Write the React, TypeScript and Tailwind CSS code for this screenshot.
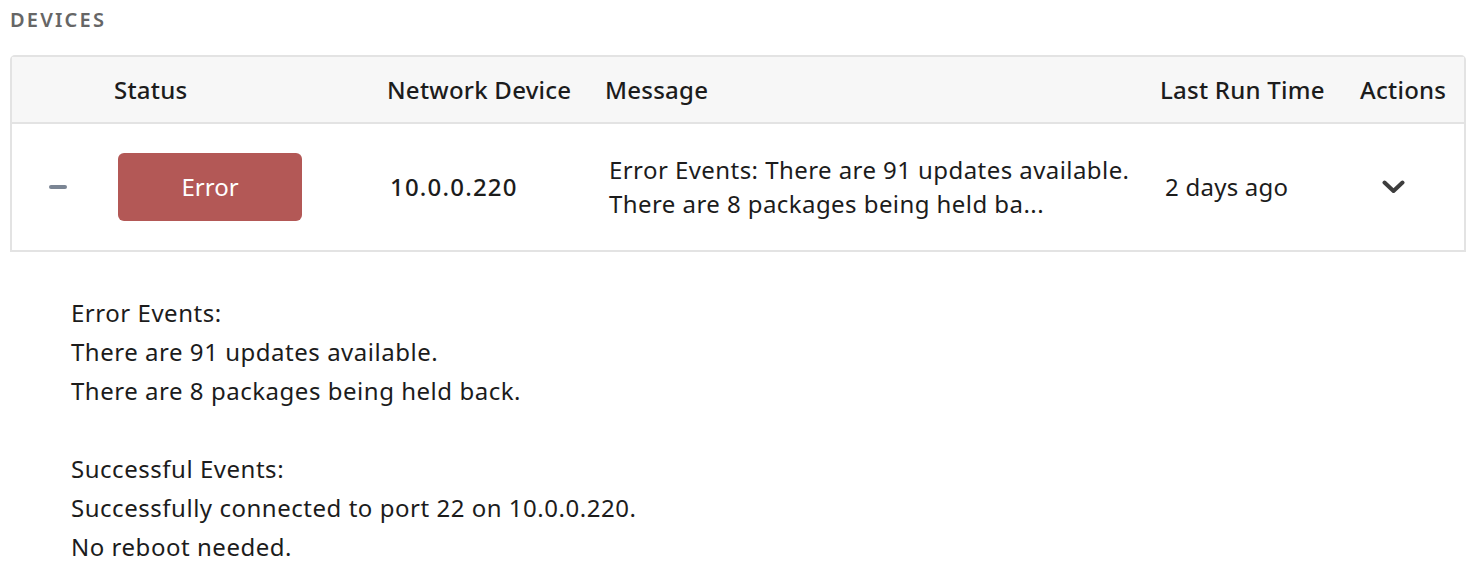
import React from 'react'

const headers = ['', 'Status', 'Network Device', 'Message', 'Last Run Time', 'Actions']

const App = () => {
	return (
		<main className="w-[1476px] h-[570px] bg-white text-[#1c1c1c] overflow-hidden" style={{ fontFamily: '"Noto Sans", Roboto, sans-serif' }}>
			<h2 className="pl-[10px] pt-[5px] h-[55px] text-[20px] font-semibold tracking-[0.11em] text-[#666]">DEVICES</h2>
			<section className="mx-[10px] border-2 border-[#e3e3e3] rounded-t-[5px]">
				<div className="grid grid-cols-[88px_273px_218px_555px_200px_1fr] h-[67px] bg-[#f7f7f7] border-b-2 border-[#e3e3e3] items-center">
					{headers.map((h, i) => (
						<div key={i} className="pl-[14px] text-[24px] font-medium tracking-[0.01em]">{h}</div>
					))}
				</div>
				<div className="grid grid-cols-[88px_273px_218px_555px_200px_1fr] h-[126px] items-center">
					<div className="flex justify-center pl-[4px]">
						<span className="block w-[18px] h-[4px] rounded-sm bg-[#7b8594]"></span>
					</div>
					<div className="pl-[18px]">
						<button className="w-[184px] h-[68px] rounded-[6px] bg-[#b35856] text-white text-[24px]">Error</button>
					</div>
					<div className="pl-[17px] text-[24px] font-medium tracking-[0.05em]">10.0.0.220</div>
					<div className="pl-[18px] text-[24px] leading-[34px] tracking-[0.018em]">
						<div>Error Events: There are 91 updates available.</div>
						<div>There are 8 packages being held ba...</div>
					</div>
					<div className="pl-[19px] text-[24px] tracking-[0.01em]">2 days ago</div>
					<div className="pl-[36px]">
						<svg width="23" height="14" viewBox="0 0 23 14" fill="none">
							<path d="M2.5 2.5 L11.5 11 L20.5 2.5" stroke="#3d3d3d" strokeWidth="4" strokeLinecap="round" strokeLinejoin="round" />
						</svg>
					</div>
				</div>
			</section>
			<article className="pl-[71px] pt-[41px] text-[24px] leading-[39px] tracking-[0.022em]">
				<div>Error Events:</div>
				<div>There are 91 updates available.</div>
				<div>There are 8 packages being held back.</div>
				<div className="h-[39px]"></div>
				<div>Successful Events:</div>
				<div>Successfully connected to port 22 on 10.0.0.220.</div>
				<div>No reboot needed.</div>
			</article>
		</main>
	)
}

export default App
